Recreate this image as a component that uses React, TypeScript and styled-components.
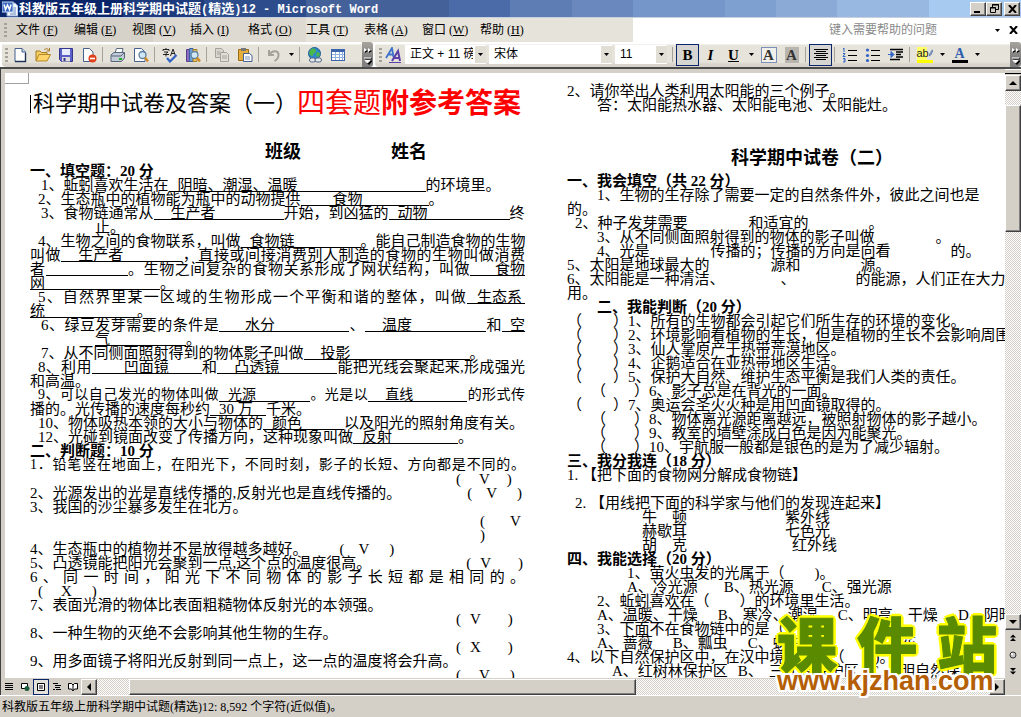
import React from "react";
import styled, { createGlobalStyle, css } from "styled-components";

const GlobalStyle = createGlobalStyle`
  * { box-sizing: border-box; }
  body { margin: 0; overflow: hidden; }
  button, input, select { font: inherit; color: inherit; margin: 0; padding: 0; border: 0; background: none; border-radius: 0; }
`;

const face = "#d4d0c8";
const uiFont = `"Liberation Serif", "Noto Sans CJK SC", serif`;

/* ---------- window frame ---------- */

const Window = styled.div`
  height: 100vh;
  display: flex;
  flex-direction: column;
  background: ${face};
  font: 12px/14px ${uiFont};
  color: #000;
`;

const TitleBar = styled.header`
  display: flex;
  align-items: center;
  height: 18px;
  padding: 0 1px 0 2px;
  border-bottom: 1px solid #c8d0e0;
  background: linear-gradient(
    90deg,
    #0a246a 0 12%, #1c3a7c 12% 20%, #2c4c8c 20% 30%, #456199 30% 44%,
    #4b6ba8 44% 50%, #5f7db5 50% 56%, #6a88be 56% 62%, #7596c8 62% 71%,
    #7ea0d0 71% 76%, #8baad6 76% 82%, #98b8e2 82% 91%, #a6caf0 91%
  );
`;

const TitleText = styled.h1`
  flex: 1;
  margin: 0 0 0 1px;
  color: #fff;
  font: bold 13px/17px "Noto Sans CJK SC", sans-serif;
  white-space: pre;
`;

const TitleLatin = styled.span`
  font: bold 12px/16px "Liberation Mono", monospace;
`;

const raised = css`
  background: ${face};
  border: 1px solid;
  border-color: #fff #404040 #404040 #fff;
  box-shadow: inset -1px -1px 0 #808080;
`;

const CaptionButton = styled.button<{ $apart?: boolean }>`
  ${raised}
  width: 16px;
  height: 14px;
  margin-left: ${(p) => (p.$apart ? 2 : 0)}px;
  display: flex;
  align-items: center;
  justify-content: center;
`;

/* ---------- menu ---------- */

const MenuBar = styled.nav`
  display: flex;
  align-items: center;
  height: 24px;
  padding-left: 4px;
  background: linear-gradient(90deg, #d6d2ca 0 15%, #dedad2 15% 30%, #e6e3db 30% 62%, #fff 62%);
`;

const Grip = styled.span`
  flex: none;
  width: 3px;
  height: 14px;
  background: repeating-linear-gradient(#a5a29a 0 2px, transparent 2px 4px);
`;

const MenuList = styled.div`
  display: flex;
  flex: 1;
  margin-left: 9px;
`;

const MenuButton = styled.button`
  width: 58px;
  text-align: left;
  line-height: 20px;
  white-space: nowrap;
`;

const HelpBox = styled.input`
  width: 160px;
  outline: none;
  &::placeholder { color: #8a8a8a; opacity: 1; }
`;

const PlainButton = styled.button<{ $w: number }>`
  width: ${(p) => p.$w}px;
  height: 16px;
  display: flex;
  align-items: center;
  justify-content: center;
`;

/* ---------- toolbars ---------- */

const ToolRow = styled.div`
  display: flex;
  height: 25px;
  background: #fff;
`;

const Toolbar = styled.div<{ $grow?: boolean }>`
  display: flex;
  align-items: center;
  flex: ${(p) => (p.$grow ? "1" : "none")};
  padding-left: ${(p) => (p.$grow ? 4 : 3)}px;
  margin-left: 2px;
  border-radius: 4px 0 0 4px;
  background: linear-gradient(#fff 0 2px, #e6e3db 3px 20px, #d8d4cb 22px);
`;

const ToolButton = styled.button<{ $w?: number; $on?: boolean }>`
  flex: none;
  width: ${(p) => p.$w ?? 23}px;
  height: 22px;
  display: flex;
  align-items: center;
  justify-content: center;
  ${(p) => p.$on && css`border: 1px solid #0a246a; background: #d6d5d2;`}
`;

const Divider = styled.span`
  flex: none;
  width: 1px;
  height: 15px;
  margin: 0 3px 0 2px;
  background: #a5a29a;
`;

const Overflow = styled.button`
  flex: none;
  width: 11px;
  display: flex;
  justify-content: center;
  align-items: center;
  border-radius: 0 3px 3px 0;
  background: linear-gradient(#a8a59e, #808080 60%);
`;

const Spacer = styled.span<{ $w: number }>`
  flex: none;
  width: ${(p) => p.$w}px;
`;

const ComboFrame = styled.label<{ $w: number }>`
  position: relative;
  flex: none;
  width: ${(p) => p.$w}px;
  height: 19px;
  margin-right: 3px;
  background: #fff;
`;

const ComboSelect = styled.select`
  appearance: none;
  width: 100%;
  height: 19px;
  padding: 0 13px 0 5px;
  outline: none;
  font: 12px/17px "Liberation Sans", "Noto Sans CJK SC", sans-serif;
  text-overflow: clip;
`;

const ComboArrow = styled.span`
  position: absolute;
  right: 0;
  top: 1px;
  width: 11px;
  height: 17px;
  display: flex;
  align-items: center;
  justify-content: center;
  background: #e1ded6;
  pointer-events: none;
`;

/* ---------- work area ---------- */

const Workspace = styled.main`
  flex: 1;
  min-height: 0;
  display: flex;
  border-top: 2px solid #4a4a4a;
  border-left: 1px solid #404040;
`;

const ViewPane = styled.div`
  flex: 1;
  min-width: 0;
  display: flex;
  flex-direction: column;
`;

const Paper = styled.article`
  flex: 1;
  min-height: 0;
  position: relative;
  margin: 4px 0 0 4px;
  overflow: hidden;
  background: #fff;
  display: grid;
  grid-template-columns: 495px 1fr;
  column-gap: 42px;
  padding-left: 25px;
  font: 15px/14px ${uiFont};
`;

const HeaderCorner = styled.span`
  position: absolute;
  left: 0;
  top: 0;
  width: 24px;
  height: 11px;
  border-right: 1px solid #a0a0a0;
  border-bottom: 1px solid #a0a0a0;
`;

const Column = styled.section<{ $top: number }>`
  min-width: 0;
  padding-top: ${(p) => p.$top}px;
`;

const MainTitle = styled.h2`
  margin: 0 0 17px;
  height: 36px;
  display: flex;
  align-items: center;
  font: 22px/36px ${uiFont};
  white-space: nowrap;
`;

const Caret = styled.span`
  width: 1px;
  height: 18px;
  margin-right: 2px;
  background: #000;
`;

const RedTitle = styled.span<{ $bold?: boolean }>`
  color: #f00;
  font-size: 28px;
  font-weight: ${(p) => (p.$bold ? 700 : 400)};
`;

const NameRow = styled.div`
  display: flex;
  gap: 90px;
  height: 25px;
  padding-left: 235px;
  font: bold 18px/27px ${uiFont};
`;

const SubTitle = styled.h2`
  margin: 0;
  height: 62px;
  padding: 32px 0 0 164px;
  font: bold 18px/28px ${uiFont};
  white-space: nowrap;
`;

const Line = styled.p<{ $in?: number; $bold?: boolean; $full?: boolean; $tight?: boolean }>`
  margin: 0;
  height: 14px;
  padding-left: ${(p) => p.$in ?? 0}px;
  font-size: ${(p) => (p.$tight ? 14 : 15)}px;
  font-weight: ${(p) => (p.$bold ? 700 : 400)};
  text-align-last: ${(p) => (p.$full ? "justify" : "left")};
  white-space: ${(p) => (p.$full ? "normal" : "nowrap")};
`;

const Fill = styled.span<{ $w: number; $pad?: number }>`
  display: inline-block;
  vertical-align: top;
  width: ${(p) => p.$w}px;
  height: 14px;
  padding-left: ${(p) => p.$pad ?? 0}px;
  border-bottom: 1px solid #000;
  text-align-last: left;
  white-space: nowrap;
`;

const Gap = styled.span<{ $w: number }>`
  display: inline-block;
  width: ${(p) => p.$w}px;
`;

/* ---------- scroll bars ---------- */

const checker = css`
  background: repeating-conic-gradient(#fff 0 25%, ${face} 0 50%) 0 0 / 2px 2px;
`;

const VScroll = styled.div`
  flex: none;
  width: 16px;
  display: flex;
  flex-direction: column;
`;

const SplitHandle = styled.span`
  height: 5px;
  border-bottom: 1px solid #000;
  border-top: 1px solid #fff;
  margin-bottom: 1px;
`;

const ScrollButton = styled.button`
  ${raised}
  flex: none;
  width: 16px;
  height: 16px;
  display: flex;
  align-items: center;
  justify-content: center;
`;

const VTrack = styled.div`
  ${checker}
  flex: 1;
  padding-top: 14px;
`;

const VThumb = styled.div`
  ${raised}
  height: 25%;
`;

const BrowseGroup = styled.div`
  height: 65px;
  padding-bottom: 16px;
  display: flex;
  flex-direction: column;
  align-items: center;
  justify-content: space-between;
`;

const HScroll = styled.div`
  flex: none;
  height: 17px;
  display: flex;
  padding: 1px 0 0 0;
`;

const ViewButton = styled.button<{ $on?: boolean }>`
  flex: none;
  width: 16px;
  height: 16px;
  display: flex;
  align-items: center;
  justify-content: center;
  ${(p) => p.$on && css`border: 1px solid #0a246a; background: #e4e2dd;`}
`;

const HTrack = styled.div`
  ${checker}
  flex: 1;
  padding-left: 32px;
`;

const HThumb = styled.div`
  ${raised}
  height: 16px;
  width: 59%;
`;

const StatusBar = styled.footer`
  height: 22px;
  border-top: 1px solid #fff;
  padding-left: 2px;
  line-height: 22px;
  white-space: nowrap;
`;

/* ---------- site stamp ---------- */

const Stamp = styled.div`
  position: absolute;
  right: 20px;
  bottom: 24px;
  width: 228px;
  display: flex;
  flex-direction: column;
  pointer-events: none;
`;

const StampName = styled.div`
  display: flex;
  justify-content: space-between;
  padding: 0 4px;
  font: 900 60px/54px "Noto Sans CJK SC", sans-serif;
  color: #5a8a00;
  -webkit-text-stroke: 1px #5a8a00;
  text-shadow: 3px 0 0 #ff0, -3px 0 0 #ff0, 0 3px 0 #ff0, 0 -3px 0 #ff0,
    2px 2px 0 #ff0, -2px 2px 0 #ff0, 2px -2px 0 #ff0, -2px -2px 0 #ff0;
`;

const StampUrl = styled.div`
  padding-left: 4px;
  font: bold 27px/24px "Liberation Sans", sans-serif;
  color: #b45f06;
  text-shadow: 2px 0 0 #fff, -2px 0 0 #fff, 0 2px 0 #fff, 0 -2px 0 #fff,
    2px 2px 0 #fff, -2px 2px 0 #fff, 2px -2px 0 #fff, -2px -2px 0 #fff;
`;

/* ---------- icons ---------- */

const Svg = ({ w = 16, h = 16, children }: { w?: number; h?: number; children: React.ReactNode }) => (
  <svg width={w} height={h} viewBox={`0 0 ${w} ${h}`} fill="none" aria-hidden="true">
    {children}
  </svg>
);

const Down = () => <Svg w={5} h={3}><path d="M0 0h5L2.500 3z" fill="#000" /></Svg>;
const Arrow = ({ d }: { d: string }) => <Svg w={8} h={8}><path d={d} fill="#000" /></Svg>;
const Close = () => <Svg w={9} h={8}><path d="M1 0l7 8M8 0L1 8" stroke="#000" strokeWidth="2" /></Svg>;
const Chevrons = () => (
  <Svg w={9} h={20}>
    <path d="M2 4l3 2-3 2zM6 4l3 2-3 2z" fill="#000" />
    <path d="M1 3l3 2-3 2zM5 3l3 2-3 2z" fill="#fff" />
    <path d="M2 14h7M3 16h6l-3 3.500z" fill="#000" stroke="#000" />
    <path d="M1 13h7M2 15.500h5L4.500 18z" fill="#fff" stroke="#fff" />
  </Svg>
);

const WordLogo = () => (
  <Svg>
    <path d="M5 2h8l3 3v10H5z" fill="#f4f8ff" stroke="#8aa4d0" />
    <path d="M11 7h3M11 9h3M11 11h3M8 13h6" stroke="#6a86c0" />
    <rect x="0" y="1" width="11" height="10" fill="#3a6ac0" stroke="#c6d8f4" />
    <path d="M2 3.500l1.500 5 2-4.500 2 4.500 1.500-5" stroke="#fff" strokeWidth="1.500" />
  </Svg>
);
const Sheet = () => <path d="M3 1.500h7l3.500 3.500v9.500H3z" fill="#fff" stroke="#45608e" />;
const Lens = () => (
  <>
    <circle cx="9.500" cy="8" r="3.500" fill="#cfe6f5" stroke="#5c7fa0" strokeWidth="1.300" />
    <path d="M12 10.500l3 4" stroke="#d08a28" strokeWidth="2.400" />
  </>
);

const icons: Record<string, React.ReactNode> = {
  new: <Svg><Sheet /><path d="M10 1.500V5h3.500" fill="#c9d8ee" stroke="#45608e" /><path d="M3 14.500h10.500V6" stroke="#1f3358" strokeWidth="1.400" /></Svg>,
  open: (
    <Svg>
      <path d="M1 14V4h4l1.500 1.500H12V8" fill="#f3cf6a" stroke="#a87a1c" />
      <path d="M1 14l3-6.500h11.500L12 14z" fill="#ffd56a" stroke="#b58524" />
      <path d="M9 3c2-2 4-1.500 5 .5M14.500 1v3h-3" stroke="#b07a20" />
    </Svg>
  ),
  save: (
    <Svg>
      <path d="M1.500 1.500h13v13h-11l-2-2z" fill="#5b5fc8" stroke="#34368c" />
      <rect x="4" y="2" width="8" height="6" fill="#e8ecff" />
      <rect x="4" y="10" width="8" height="4.500" fill="#ddd" />
      <rect x="5.500" y="11" width="2" height="3" fill="#34368c" />
    </Svg>
  ),
  permission: (
    <Svg>
      <path d="M2.500 1.500h6l3.500 3.500v9.500H2.500z" fill="#fff" stroke="#45608e" />
      <circle cx="11.500" cy="11.500" r="4" fill="#e0401c" /><path d="M9 11.500h5" stroke="#fff" strokeWidth="1.600" />
    </Svg>
  ),
  print: (
    <Svg>
      <path d="M5 6l1.500-4.500H13L12 6z" fill="#fff" stroke="#5a6a80" />
      <path d="M1 8l3-2.500h10.500V11l-3 3.500H1z" fill="#c4ccd8" stroke="#56657c" />
      <path d="M1.500 9h9.500l3-3" stroke="#56657c" /><path d="M9 12h3" stroke="#20b030" strokeWidth="2" />
    </Svg>
  ),
  preview: <Svg><path d="M1.500 1.500h7L12 5v9.500H1.500z" fill="#fff" stroke="#45608e" /><Lens /></Svg>,
  spell: (
    <Svg>
      <path d="M1 2.500h6M1 2.500v1.500M7 2.500v1.500M4 1v1M2 5h4L4 6.500V9.500M1 7.500h6M8.500 9l2.500-7 2.500 7M9.500 6.500h3" stroke="#222" />
      <path d="M5 11l3 3.500L14.500 8" stroke="#2f62c4" strokeWidth="2.200" />
    </Svg>
  ),
  research: (
    <Svg>
      <path d="M1.500 2.500h3v12h-3z" fill="#8c6cc0" stroke="#54408a" />
      <path d="M4.500 1.500h3.500v13H4.500z" fill="#6fa0dc" stroke="#38609c" />
      <path d="M8 2.500h4v12H8z" fill="#f0c860" stroke="#a8802c" /><Lens />
    </Svg>
  ),
  copy: (
    <Svg>
      <path d="M1.500 1.500h6l2 2v7h-8z" fill="#d8d5ce" stroke="#a5a29a" />
      <path d="M6.500 5.500h6l2 2v7h-8z" fill="#e2dfd8" stroke="#a5a29a" />
      <path d="M8 9h5M8 11h5M3 5h3M3 7h3" stroke="#a5a29a" />
    </Svg>
  ),
  paste: (
    <Svg>
      <path d="M1.500 2.500h10v11h-10z" fill="#e5ae3a" stroke="#9a6a14" /><rect x="4" y="1" width="5" height="3" fill="#777" />
      <path d="M6.500 6.500h6l2.500 2v6H6.500z" fill="#fff" stroke="#45608e" /><path d="M8 10h5M8 12h5" stroke="#7a94c0" />
    </Svg>
  ),
  undo: <Svg><path d="M3 3v5h5M3.500 7.500C6 3 13 3 12.500 8c0 3-2 5-4 6" stroke="#a5a29a" strokeWidth="2" /></Svg>,
  link: (
    <Svg>
      <circle cx="7.500" cy="6.500" r="6" fill="#2f86c8" stroke="#1f5c90" />
      <path d="M4 2c3-1 5 0 5 2S6 6 6 8 3 9 2 6z" fill="#4cb848" /><path d="M10 5l3 1-1 4-3-1z" fill="#4cb848" />
      <rect x="2.500" y="11" width="6" height="4" rx="2" fill="#e4e8f0" stroke="#56657c" />
      <rect x="8" y="11" width="6.500" height="4" rx="2" fill="#e4e8f0" stroke="#56657c" />
    </Svg>
  ),
  table: (
    <Svg>
      <rect x="1.500" y="2.500" width="13" height="11" fill="#fff" stroke="#3c64ac" /><path d="M1 3.500h14" stroke="#3c64ac" strokeWidth="3" />
      <path d="M2 7.500h12M2 10.500h12M5.500 5v8M9.500 5v8M12.500 5v8" stroke="#8fb0e0" />
    </Svg>
  ),
  styles: (
    <Svg w={18}>
      <path d="M1 11L7 1l1.500 9M3.500 7.500H8" stroke="#3f72cc" strokeWidth="1.800" />
      <path d="M7 14l6-10 2 10M9.500 11H14" stroke="#5c40a8" strokeWidth="2" /><path d="M4 15.500h12" stroke="#5c40a8" />
    </Svg>
  ),
  center: <Svg><path d="M1 2.500h14M3 4.500h10M1 6.500h14M3 8.500h10M1 10.500h14M3 12.500h10" stroke="#000" /></Svg>,
  numbers: (
    <Svg>
      <path d="M6 3.500h9M6 8.500h9M6 13.500h9" stroke="#000" />
      <path d="M1 2l1-1v4M1 6.500h2l-2 3h2.500M1 11.500h2v1.500h-1.500M3 13v2H1" stroke="#2f62c4" />
    </Svg>
  ),
  bullets: (
    <Svg>
      <path d="M6 3.500h9M6 8.500h9M6 13.500h9" stroke="#000" />
      <circle cx="2.500" cy="3" r="1.600" fill="#2f62c4" /><circle cx="2.500" cy="8.500" r="1.600" fill="#2f62c4" /><circle cx="2.500" cy="13.500" r="1.600" fill="#2f62c4" />
    </Svg>
  ),
  indent: (
    <Svg>
      <path d="M2 2.500h13M8 5h7M8 7.500h5M8 10h7M2 12.500h10" stroke="#000" strokeWidth="1.400" />
      <path d="M0 7.500h5M3 4.500l3 3-3 3z" stroke="#2f62c4" fill="#2f62c4" />
    </Svg>
  ),
  normal: <Svg w={10} h={10}><path d="M1 1.500h8M1 3.500h8M1 5.500h8M1 7.500h8" stroke="#000" /></Svg>,
  web: <Svg w={10} h={10}><path d="M1.500 1.500h6v5h-6z" stroke="#000" fill="#fff" /><circle cx="7" cy="6.500" r="2.500" fill="#1d5c3c" /></Svg>,
  layout: <Svg w={10} h={10}><path d="M1.500 1.500h7v7h-7z" stroke="#000" fill="#fff" /><path d="M3 4h4M3 6h4" stroke="#000" /></Svg>,
  outline: <Svg w={10} h={10}><path d="M1 1.500h5M3 3.500h6M3 5.500h5M1 7.500h2M4 7.500h5" stroke="#000" /></Svg>,
  reading: <Svg w={10} h={10}><path d="M.5 1.500h3L5 3l1.500-1.500h3V7H6.500L5 9 3.500 7h-3zM5 3v5" stroke="#000" fill="#fff" /></Svg>,
};

const Letter = styled.span<{ $kind: "b" | "i" | "u" | "box" | "shade" }>`
  font: bold 15px/16px "Liberation Serif", serif;
  ${(p) => p.$kind === "i" && css`font-style: italic;`}
  ${(p) => p.$kind === "u" && css`text-decoration: underline;`}
  ${(p) => p.$kind === "box" && css`width: 16px; border: 1px solid #7a90b8; background: #f2f0ea; line-height: 14px; color: #333;`}
  ${(p) => p.$kind === "shade" && css`width: 14px; background: #b8b5ae; color: #333;`}
`;

const Swatched = styled.span<{ $bar: string; $ink: string; $bg?: string }>`
  width: 16px;
  border-bottom: 3px solid ${(p) => p.$bar};
  background: linear-gradient(90deg, ${(p) => p.$bg ?? "transparent"} 60%, transparent 60%);
  color: ${(p) => p.$ink};
  font: bold 14px/13px "Liberation Serif", serif;
  display: flex;
  justify-content: center;
`;

const HighlightText = styled.span`
  font: 11px/13px "Liberation Sans", sans-serif;
`;

const Tool = ({ name, label }: { name: string; label: string }) => (
  <ToolButton aria-label={label}>{icons[name]}</ToolButton>
);

const Drop = ({ label }: { label: string }) => (
  <ToolButton $w={12} aria-label={label}><Down /></ToolButton>
);

const Combo = ({ label, value, w }: { label: string; value: string; w: number }) => (
  <ComboFrame $w={w}>
    <ComboSelect aria-label={label} defaultValue={value}>
      <option>{value}</option>
    </ComboSelect>
    <ComboArrow><Down /></ComboArrow>
  </ComboFrame>
);

/* ---------- document parts ---------- */

const Answer = ({ mark, before, after }: { mark: string; before: number; after: number }) => (
  <>(<Gap $w={before} />{mark}<Gap $w={after} />)</>
);

const Judge = ({ inset, children }: { inset?: boolean; children: React.ReactNode }) => (
  <Line $in={inset ? 24 : 0}>（<Gap $w={inset ? 28 : 31} />）{children}</Line>
);

const LeftColumn = () => (
  <Column $top={13}>
    <MainTitle>
      <Caret />科学期中试卷及答案（一）<RedTitle>四套题</RedTitle><RedTitle $bold>附参考答案</RedTitle>
    </MainTitle>
    <NameRow><span>班级</span><span>姓名</span></NameRow>
    <Line $bold>一、填空题：20 分</Line>
    <Line $in={11}>1、蚯蚓喜欢生活在<Fill $w={257} $pad={9}>阴暗、潮湿、温暖</Fill>的环境里。</Line>
    <Line $in={8}>2、生态瓶中的植物能为瓶中的动物提供<Fill $w={128} $pad={32}>食物</Fill>。</Line>
    <Line $in={11}>3、食物链通常从<Fill $w={130} $pad={17}>生产者</Fill>开始，到凶猛的<Fill $w={121} $pad={9}>动物</Fill>终</Line>
    <Line $in={65}>止。</Line>
    <Line $in={8}>4、生物之间的食物联系，叫做<Fill $w={120} $pad={9}>食物链</Fill>。能自己制造食物的生物</Line>
    <Line $full>叫做<Fill $w={121} $pad={17}>生产者</Fill>，直接或间接消费别人制造的食物的生物叫做消费</Line>
    <Line $full>者<Fill $w={82} />。生物之间复杂的食物关系形成了网状结构，叫做<Fill $w={55} $pad={25}>食物</Fill></Line>
    <Line><Fill $w={130}>网</Fill>。</Line>
    <Line $in={8} $full>5、自然界里某一区域的生物形成一个平衡和谐的整体，叫做<Fill $w={58} $pad={10}>生态系</Fill></Line>
    <Line><Fill $w={107}>统</Fill>。</Line>
    <Line $in={11} $full>6、绿豆发芽需要的条件是<Fill $w={130} $pad={26}>水分</Fill>、<Fill $w={121} $pad={17}>温度</Fill>和<Fill $w={23} $pad={8}>空</Fill></Line>
    <Line $in={65}><Fill $w={91}>气</Fill>。</Line>
    <Line $in={11}>7、从不同侧面照射得到的物体影子叫做<Fill $w={166} $pad={17}>投影</Fill>。</Line>
    <Line $in={8} $full>8、利用<Fill $w={110} $pad={32}>凹面镜</Fill>和<Fill $w={120} $pad={17}>凸透镜</Fill>能把光线会聚起来,形成强光</Line>
    <Line>和高温。</Line>
    <Line $in={8} $full $tight>9、可以自己发光的物体叫做<Fill $w={91} $pad={9}>光源</Fill>。光是以<Fill $w={99} $pad={17}>直线</Fill>的形式传</Line>
    <Line>播的。光传播的速度每秒约<Fill $w={56} $pad={9}>30 万</Fill>千米。</Line>
    <Line $in={8}>10、物体吸热本领的大小与物体的<Fill $w={81} $pad={9}>颜色</Fill>以及阳光的照射角度有关。</Line>
    <Line $in={8}>12、光碰到镜面改变了传播方向，这种现象叫做<Fill $w={105} $pad={9}>反射</Fill>。</Line>
    <Line $bold>二、判断题：10 分</Line>
    <Line $full $tight>1．铅笔竖在地面上，在阳光下，不同时刻，影子的长短、方向都是不同的。</Line>
    <Line $in={426}><Answer mark="V" before={18} after={17} /></Line>
    <Line>2、光源发出的光是直线传播的,反射光也是直线传播的。<Gap $w={66} /><Answer mark="V" before={14} after={20} /></Line>
    <Line>3、我国的沙尘暴多发生在北方。</Line>
    <Line $in={450}>(<Gap $w={25} />V</Line>
    <Line $in={450}>)</Line>
    <Line>4、生态瓶中的植物并不是放得越多越好。<Gap $w={32} /><Answer mark="V" before={14} after={20} /></Line>
    <Line>5、凸透镜能把阳光会聚到一点,这个点的温度很高。<Gap $w={95} /><Answer mark="V" before={9} after={27} /></Line>
    <Line $full>6、同一时间，阳光下不同物体的影子长短都是相同的。</Line>
    <Line $in={8}><Answer mark="X" before={18} after={20} /></Line>
    <Line>7、表面光滑的物体比表面粗糙物体反射光的本领强。</Line>
    <Line $in={426}><Answer mark="V" before={9} after={27} /></Line>
    <Line>8、一种生物的灭绝不会影响其他生物的生存。</Line>
    <Line $in={426}><Answer mark="X" before={9} after={27} /></Line>
    <Line>9、用多面镜子将阳光反射到同一点上，这一点的温度将会升高。</Line>
    <Line $in={426}><Answer mark="V" before={18} after={20} /></Line>
  </Column>
);

const RightColumn = () => (
  <Column $top={11}>
    <Line>2、请你举出人类利用太阳能的三个例子。</Line>
    <Line $in={30}>答：太阳能热水器、太阳能电池、太阳能灶。</Line>
    <SubTitle>科学期中试卷（二）</SubTitle>
    <Line $bold>一、我会填空（共 22 分）</Line>
    <Line $in={30}>1、生物的生存除了需要一定的自然条件外，彼此之间也是</Line>
    <Line>的。</Line>
    <Line $in={8}>2、种子发芽需要<Gap $w={61} />和适宜的<Gap $w={60} />。</Line>
    <Line $in={30}>3、从不同侧面照射得到的物体的影子叫做<Gap $w={61} />。</Line>
    <Line $in={30}>4、光是<Gap $w={61} />传播的；传播的方向是向看<Gap $w={60} />的。</Line>
    <Line>5、太阳是地球最大的<Gap $w={61} />源和<Gap $w={60} />源。</Line>
    <Line>6、太阳能是一种清洁、<Gap $w={56} />、<Gap $w={60} />的能源，人们正在大力开</Line>
    <Line>用。</Line>
    <Line $in={30} $bold>二、我能判断（20 分）</Line>
    <Judge>1、所有的生物都会引起它们所生存的环境的变化。</Judge>
    <Judge>2、环境影响看植物的生长，但是植物的生长不会影响周围</Judge>
    <Judge>3、仙人掌原产于热带荒漠地区。</Judge>
    <Judge>4、企鹅适合在亚热带地区生活。</Judge>
    <Judge>5、保护大自然、维护生态平衡是我们人类的责任。</Judge>
    <Judge inset>6、影子总是在背光的一面。</Judge>
    <Judge>7、奥运会圣火火种是用凹面镜取得的。</Judge>
    <Judge inset>8、物体离光源距离越远，被照射物体的影子越小。</Judge>
    <Judge inset>9、教室的墙壁涂成白色是因为能聚光。</Judge>
    <Judge inset>10、宇航服一般都是银色的是为了减少辐射。</Judge>
    <Line $bold>三、我分我连（18 分）</Line>
    <Line>1. 【把下面的食物网分解成食物链】</Line>
    <Line />
    <Line $in={8}>2. 【用线把下面的科学家与他们的发现连起来】</Line>
    <Line $in={75}>牛　顿<Gap $w={98} />紫外线</Line>
    <Line $in={75}>赫歇耳<Gap $w={98} />七色光</Line>
    <Line $in={75}>胡　克<Gap $w={105} />红外线</Line>
    <Line $bold>四、我能选择（20 分）</Line>
    <Line $in={60}>1、萤火虫发的光属于（<Gap $w={30} />)。</Line>
    <Line $in={60}>A、冷光源<Gap $w={26} />B、热光源<Gap $w={28} />C、强光源</Line>
    <Line $in={30}>2、蚯蚓喜欢在（<Gap $w={30} />）的环境里生活。</Line>
    <Line $in={30}>A、温暖、干燥<Gap $w={20} />B、寒冷、潮湿<Gap $w={20} />C、明亮、干燥<Gap $w={20} />D、阴暗</Line>
    <Line $in={30}>3、下面不在食物链中的是（<Gap $w={30} />）。</Line>
    <Line $in={30}>A、蔷薇<Gap $w={20} />B、瓢虫<Gap $w={20} />C、蚜虫<Gap $w={98} />花</Line>
    <Line>4、以下自然保护区中，在汉中境内的是（<Gap $w={30} />)。</Line>
    <Line $in={45}>A、红树林保护区<Gap $w={10} />B、<Gap $w={6} />三江源保护区<Gap $w={10} />C、<Gap $w={6} />明自然保护区</Line>
  </Column>
);

const menus = [
  ["文件", "F"], ["编辑", "E"], ["视图", "V"], ["插入", "I"], ["格式", "O"],
  ["工具", "T"], ["表格", "A"], ["窗口", "W"], ["帮助", "H"],
];

export default function App() {
  return (
    <Window>
      <GlobalStyle />
      <TitleBar>
        <WordLogo />
        <TitleText>
          科教版五年级上册科学期中试题<TitleLatin>(</TitleLatin>精选<TitleLatin>)12 - Microsoft Word</TitleLatin>
        </TitleText>
        <CaptionButton aria-label="最小化"><Svg w={8} h={8}><path d="M0 7h6" stroke="#000" strokeWidth="2" /></Svg></CaptionButton>
        <CaptionButton aria-label="还原">
          <Svg w={9} h={9}><path d="M2.500 3V.5h6v5H6M.5 3.500h5v5h-5zM2 1h7M0 4h6" stroke="#000" /></Svg>
        </CaptionButton>
        <CaptionButton aria-label="关闭" $apart><Close /></CaptionButton>
      </TitleBar>

      <MenuBar>
        <Grip />
        <MenuList>
          {menus.map(([name, key]) => (
            <MenuButton key={key}>{name} (<u>{key}</u>)</MenuButton>
          ))}
        </MenuList>
        <HelpBox aria-label="帮助" placeholder="键入需要帮助的问题" />
        <PlainButton $w={16} aria-label="帮助列表"><Down /></PlainButton>
        <PlainButton $w={16} aria-label="关闭文档"><Close /></PlainButton>
      </MenuBar>

      <ToolRow>
        <Toolbar>
          <Grip />
          <Tool name="new" label="新建" /><Tool name="open" label="打开" />
          <Tool name="save" label="保存" /><Tool name="permission" label="权限" />
          <Divider />
          <Tool name="print" label="打印" /><Tool name="preview" label="打印预览" />
          <Divider />
          <Tool name="spell" label="拼写和语法" /><Tool name="research" label="信息检索" />
          <Divider />
          <Tool name="copy" label="复制" /><Tool name="paste" label="粘贴" />
          <Divider />
          <Tool name="undo" label="撤消" /><Drop label="撤消列表" />
          <Divider />
          <Tool name="link" label="超链接" /><Tool name="table" label="插入表格" />
          <Spacer $w={13} />
        </Toolbar>
        <Overflow aria-label="工具栏选项"><Chevrons /></Overflow>
        <Toolbar $grow>
          <Grip />
          <Tool name="styles" label="格式窗格" />
          <Combo label="样式" value="正文 + 11 磅" w={81} />
          <Combo label="字体" value="宋体" w={123} />
          <Combo label="字号" value="11" w={52} />
          <Divider />
          <ToolButton $on aria-label="加粗"><Letter $kind="b">B</Letter></ToolButton>
          <ToolButton aria-label="倾斜"><Letter $kind="i">I</Letter></ToolButton>
          <ToolButton aria-label="下划线"><Letter $kind="u">U</Letter></ToolButton>
          <Drop label="下划线样式" />
          <ToolButton aria-label="字符边框"><Letter $kind="box">A</Letter></ToolButton>
          <ToolButton aria-label="字符底纹"><Letter $kind="shade">A</Letter></ToolButton>
          <Divider />
          <ToolButton $on aria-label="居中">{icons.center}</ToolButton>
          <Divider />
          <Tool name="numbers" label="编号" /><Tool name="bullets" label="项目符号" />
          <Tool name="indent" label="增加缩进量" />
          <Divider />
          <ToolButton aria-label="突出显示">
            <Swatched $bar="#ff0" $ink="#222" $bg="#ffff66"><HighlightText>ab</HighlightText>
              <Svg w={6} h={12}><path d="M5 1L1 8l-1 3 3-2 3-6z" fill="#8fb0e0" stroke="#45608e" /></Svg>
            </Swatched>
          </ToolButton>
          <Drop label="突出显示颜色" />
          <ToolButton aria-label="字体颜色"><Swatched $bar="#000" $ink="#2f5fae">A</Swatched></ToolButton>
          <Drop label="字体颜色列表" />
        </Toolbar>
        <Overflow aria-label="工具栏选项"><Chevrons /></Overflow>
      </ToolRow>

      <Workspace>
        <ViewPane>
          <Paper>
            <HeaderCorner />
            <LeftColumn />
            <RightColumn />
          </Paper>
          <HScroll>
            <ViewButton aria-label="普通视图">{icons.normal}</ViewButton>
            <ViewButton aria-label="Web 版式">{icons.web}</ViewButton>
            <ViewButton $on aria-label="页面视图">{icons.layout}</ViewButton>
            <ViewButton aria-label="大纲视图">{icons.outline}</ViewButton>
            <ViewButton aria-label="阅读版式">{icons.reading}</ViewButton>
            <ScrollButton aria-label="向左滚动"><Arrow d="M6 0v8L2 4z" /></ScrollButton>
            <HTrack><HThumb /></HTrack>
            <ScrollButton aria-label="向右滚动"><Arrow d="M2 0v8l4-4z" /></ScrollButton>
          </HScroll>
        </ViewPane>
        <VScroll>
          <SplitHandle />
          <ScrollButton aria-label="向上滚动"><Arrow d="M0 6h8L4 2z" /></ScrollButton>
          <VTrack><VThumb /></VTrack>
          <ScrollButton aria-label="向下滚动"><Arrow d="M0 2h8L4 6z" /></ScrollButton>
          <BrowseGroup>
            <PlainButton $w={16} aria-label="前一页"><Arrow d="M1 3.500L4 .5l3 3zM1 7L4 4l3 3z" /></PlainButton>
            <PlainButton $w={16} aria-label="选择浏览对象">
              <Svg w={8} h={8}><circle cx="4" cy="4" r="3" fill="#c8c8c8" stroke="#333" /><circle cx="3" cy="3" r="1" fill="#fff" /></Svg>
            </PlainButton>
            <PlainButton $w={16} aria-label="下一页"><Arrow d="M1 1l3 3 3-3zM1 4.500l3 3 3-3z" /></PlainButton>
          </BrowseGroup>
        </VScroll>
      </Workspace>

      <StatusBar>科教版五年级上册科学期中试题(精选)12: 8,592 个字符(近似值)。</StatusBar>

      <Stamp>
        <StampName><span>课</span><span>件</span><span>站</span></StampName>
        <StampUrl>www.kjzhan.com</StampUrl>
      </Stamp>
    </Window>
  );
}
